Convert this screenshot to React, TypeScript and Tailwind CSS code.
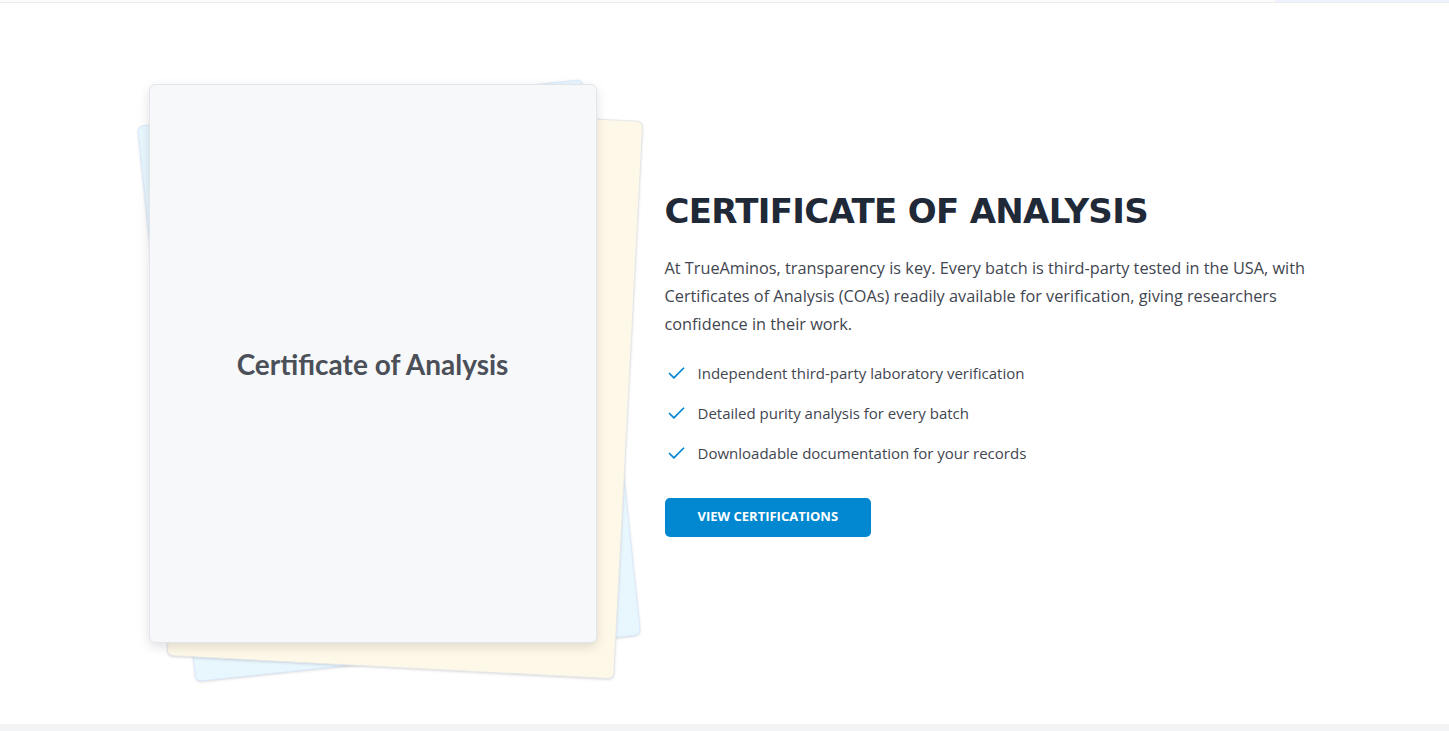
const points = [
  "Independent third-party laboratory verification",
  "Detailed purity analysis for every batch",
  "Downloadable documentation for your records",
];

function Check() {
  return (
    <svg width="21" height="21" viewBox="0 0 24 24" fill="none" stroke="currentColor" strokeWidth="2" strokeLinecap="round" strokeLinejoin="round" className="text-[#0288d1] shrink-0">
      <path d="M20 6 9 17l-5-5" />
    </svg>
  );
}

export default function App() {
  return (
    <div className="w-full bg-white font-['Open_Sans',sans-serif]">
      <div className="flex h-[3px] border-b border-[#ececec]">
        <div className="flex-1 bg-[#fbfbfb]" />
        <div className="w-[174px] bg-[#edf2fd]" />
      </div>

      <section className="bg-white py-[81px]">
        <div className="mx-auto flex max-w-7xl items-center gap-[68px] px-16">
          <div className="relative w-[448px] shrink-0">
            <div className="absolute inset-0 translate-x-[16px] translate-y-[17px] -rotate-6 rounded-md border border-[#dbeafe] bg-[#e8f6fd] shadow-sm" />
            <div className="absolute inset-0 translate-x-[32px] translate-y-[25px] rotate-3 rounded-md border border-[#e5e7eb] bg-[#fdf8e7] shadow-sm" />
            <div className="relative flex h-[559px] items-center justify-center rounded-md border border-[#e2e5ea] bg-[#f7f8fa] shadow-[0_4px_12px_rgba(0,0,0,0.12)]">
              <span className="font-['Lato',sans-serif] text-[28px] font-bold text-[#4b5058]">Certificate of Analysis</span>
            </div>
          </div>

          <div className="w-[650px] shrink-0">
            <h2 className="font-['DejaVu_Sans',sans-serif] text-[34px] font-bold leading-[40px] tracking-[-0.02em] text-[#1f2937]">
              CERTIFICATE OF ANALYSIS
            </h2>
            <p className="mt-[23px] text-[16.3px] leading-[28px] text-[#3f4650]">
              At TrueAminos, transparency is key. Every batch is third-party tested in the USA, with Certificates of Analysis (COAs) readily available for verification, giving researchers confidence in their work.
            </p>
            <ul className="mt-[24px] flex flex-col gap-[16px]">
              {points.map((p) => (
                <li key={p} className="flex h-[24px] items-center gap-[11px] pl-[1px] text-[15px] text-[#3f4650]">
                  <Check />
                  <span>{p}</span>
                </li>
              ))}
            </ul>
            <button className="mt-[32px] h-[39px] rounded-[5px] bg-[#0288d1] px-[33px] text-[13px] font-bold uppercase text-white">
              View Certifications
            </button>
          </div>
        </div>
      </section>

      <div className="h-[8px] bg-[#f3f4f6]" />
    </div>
  );
}
